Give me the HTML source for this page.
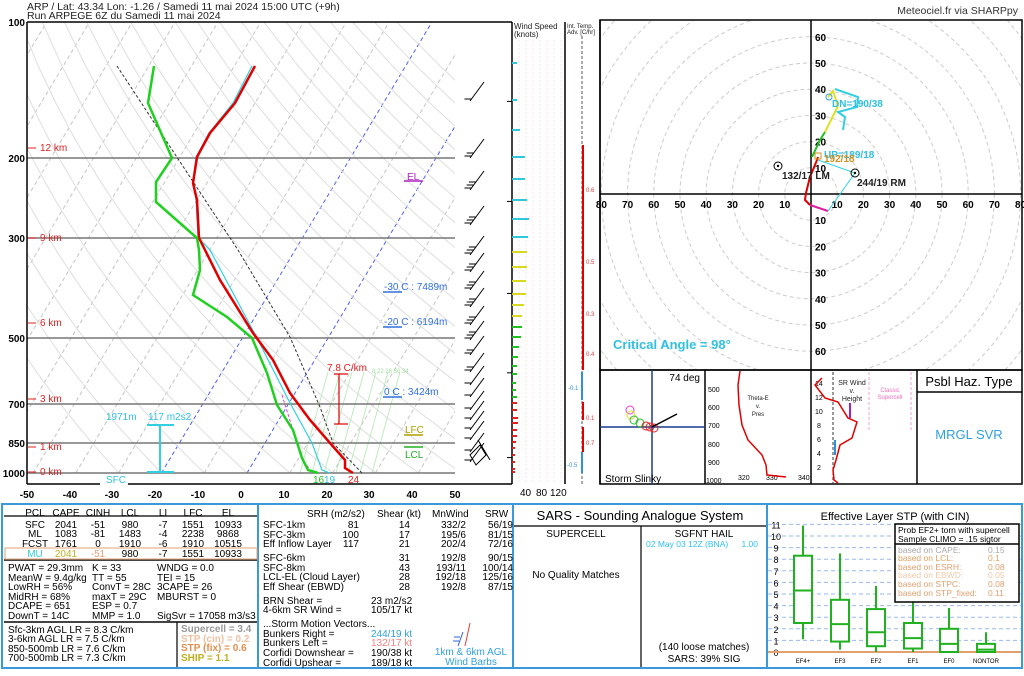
<!DOCTYPE html>
<html><head><meta charset="utf-8"><style>
html,body{margin:0;padding:0;background:#fff;}
body{width:1024px;height:671px;overflow:hidden;font-family:"Liberation Sans",sans-serif;}
svg text{font-family:"Liberation Sans",sans-serif;}
</style></head><body>
<svg id="s" width="1024" height="671" viewBox="0 0 1024 671" xmlns="http://www.w3.org/2000/svg">
<rect width="1024" height="671" fill="#fff"/>
<defs>
<clipPath id="sk"><rect x="27" y="22" width="428" height="451"/></clipPath>
<clipPath id="ho"><rect x="601" y="21" width="421" height="348"/></clipPath>
</defs>
<g id="grid" clip-path="url(#sk)"></g>
<g id="hgrid" clip-path="url(#ho)"></g>

<!-- header -->
<text x="27" y="10" font-size="10.5" fill="#222">ARP / Lat: 43.34 Lon: -1.26 / Samedi 11 mai 2024 15:00 UTC (+9h)</text>
<text x="27" y="19" font-size="10.5" fill="#222">Run ARPEGE 6Z du Samedi 11 mai 2024</text>
<text x="1018" y="14" font-size="10.5" fill="#333" text-anchor="end">Meteociel.fr via SHARPpy</text>

<!-- skewT pressure lines -->
<g stroke="#777" stroke-width="1.5">
<line x1="27" y1="158" x2="455" y2="158"/><line x1="27" y1="238" x2="455" y2="238"/>
<line x1="27" y1="338" x2="455" y2="338"/><line x1="27" y1="404" x2="455" y2="404"/>
<line x1="27" y1="443" x2="455" y2="443"/><line x1="27" y1="473" x2="455" y2="473"/>
</g>
<g stroke="#000" stroke-width="1.5" fill="none">
<line x1="27" y1="22" x2="512" y2="22"/>
<line x1="27" y1="22" x2="27" y2="484"/>
<line x1="27" y1="484" x2="100" y2="484"/><line x1="128" y1="484" x2="512" y2="484"/>
<line x1="512" y1="22" x2="512" y2="484"/>
</g>
<g font-size="10" font-weight="bold" fill="#000" text-anchor="end">
<text x="25" y="26">100</text><text x="25" y="162">200</text><text x="25" y="242">300</text>
<text x="25" y="342">500</text><text x="25" y="408">700</text><text x="25" y="447">850</text><text x="25" y="477">1000</text>
</g>
<g font-size="10" font-weight="bold" fill="#000" text-anchor="middle">
<text x="27" y="498">-50</text><text x="70" y="498">-40</text><text x="112" y="498">-30</text><text x="155" y="498">-20</text>
<text x="198" y="498">-10</text><text x="241" y="498">0</text><text x="284" y="498">10</text><text x="327" y="498">20</text>
<text x="369" y="498">30</text><text x="412" y="498">40</text><text x="455" y="498">50</text>
</g>
<g font-size="10" fill="#e02020">
<line x1="28" y1="148" x2="36" y2="148" stroke="#e02020"/><text x="40" y="151">12 km</text>
<line x1="28" y1="238" x2="36" y2="238" stroke="#e02020"/><text x="40" y="241">9 km</text>
<line x1="28" y1="323" x2="36" y2="323" stroke="#e02020"/><text x="40" y="326">6 km</text>
<line x1="28" y1="399" x2="36" y2="399" stroke="#e02020"/><text x="40" y="402">3 km</text>
<line x1="28" y1="447" x2="36" y2="447" stroke="#e02020"/><text x="40" y="450">1 km</text>
<line x1="28" y1="472" x2="36" y2="472" stroke="#e02020"/><text x="40" y="475">0 km</text>
</g>

<!-- profiles -->
<polyline fill="none" stroke="#333" stroke-width="1" stroke-dasharray="3,2" points="117,66 238,250 290,337 320,407 333,443 362,473"/>
<polyline fill="none" stroke="#e040e0" stroke-width="1" stroke-dasharray="3,2" points="282,395 293,430 302,458 310,470"/>
<polyline fill="none" stroke="#30d0e0" stroke-width="1.2" points="252,66 233,103 209,133 196,157 193,183 196,200 198,238 210,250 233,293 257,338 290,403 312,443 322,470 330,473"/>
<polyline fill="none" stroke="#e00000" stroke-width="2.5" points="255,66 235,103 210,133 197,157 193,183 197,200 199,238 205,250 220,280 253,333 273,360 290,393 310,420 330,443 345,460 345,468 353,473"/>
<polyline fill="none" stroke="#20d020" stroke-width="2.5" points="154,66 148,103 172,158 156,182 156,202 197,238 199,250 200,270 193,295 227,317 252,338 267,373 277,405 293,430 302,458 308,470 318,473"/>
<g stroke="#e00000" stroke-width="1.2"><line x1="334" y1="374" x2="348" y2="374"/><line x1="334" y1="424" x2="348" y2="424"/><line x1="339" y1="374" x2="339" y2="424"/></g>
<text x="327" y="371" font-size="10" fill="#e02020">7.8 C/km</text>
<g stroke="#30d0e0" stroke-width="2"><line x1="147" y1="425" x2="174" y2="425"/><line x1="147" y1="472" x2="174" y2="472"/><line x1="160" y1="425" x2="160" y2="472"/></g>
<text x="106" y="420" font-size="10" fill="#30c0e0">1971m</text><text x="148" y="420" font-size="10" fill="#30c0e0">117 m2s2</text>
<text x="106" y="483" font-size="10" fill="#30c0e0">SFC</text>
<text x="313" y="483" font-size="10" fill="#20c020">16</text><text x="324" y="483" font-size="10" fill="#30c0e0">19</text><text x="348" y="483" font-size="10" fill="#e02020">24</text>
<text x="407" y="180" font-size="10" fill="#b020c0">EL</text><line x1="404" y1="181" x2="423" y2="181" stroke="#b020c0" stroke-width="1.5"/>
<text x="405" y="433" font-size="10" fill="#b0a000">LFC</text><line x1="404" y1="435" x2="423" y2="435" stroke="#b0a000" stroke-width="1.5"/>
<line x1="404" y1="447" x2="423" y2="447" stroke="#20b020" stroke-width="1.5"/><text x="405" y="458" font-size="10" fill="#20b020">LCL</text>
<g font-size="10" fill="#3070e0">
<text x="384" y="290">-30 C : 7489m</text><line x1="383" y1="292" x2="402" y2="292" stroke="#3070e0" stroke-width="1.5"/>
<text x="384" y="325">-20 C : 6194m</text><line x1="383" y1="327" x2="402" y2="327" stroke="#3070e0" stroke-width="1.5"/>
<text x="384" y="395">0 C : 3424m</text><line x1="383" y1="397" x2="402" y2="397" stroke="#3070e0" stroke-width="1.5"/>
</g>
<text x="372" y="373" font-size="6" fill="#a0e0a0">8 22 26 30 34</text>
<g id="barbs" stroke="#000" stroke-width="1" fill="none"></g>

<!-- wind speed panel -->
<text x="514" y="29" font-size="8" fill="#222">Wind Speed</text><text x="514" y="37" font-size="8" fill="#222">(knots)</text>
<g stroke="#f6e0dc" stroke-width="0.8" stroke-dasharray="2,2">
<line x1="519" y1="40" x2="519" y2="484"/><line x1="526" y1="40" x2="526" y2="484"/><line x1="533" y1="40" x2="533" y2="484"/>
<line x1="540" y1="40" x2="540" y2="484"/><line x1="547" y1="40" x2="547" y2="484"/><line x1="554" y1="40" x2="554" y2="484"/><line x1="561" y1="40" x2="561" y2="484"/>
</g>
<line x1="565" y1="22" x2="565" y2="484" stroke="#000" stroke-width="1.5"/>
<g id="ws" stroke-width="2"></g>
<text x="520" y="496" font-size="10" fill="#000">40</text><text x="536" y="496" font-size="10" fill="#000">80</text><text x="550" y="496" font-size="10" fill="#000">120</text>
<!-- temp adv -->
<text x="567" y="28" font-size="6" fill="#222">Int. Temp.</text><text x="567" y="34" font-size="6" fill="#222">Adv. [C/hr]</text>
<line x1="582" y1="36" x2="582" y2="484" stroke="#555" stroke-dasharray="3,2"/>
<g stroke="#e00000" stroke-width="2"><line x1="583" y1="145" x2="583" y2="370"/><line x1="583" y1="402" x2="583" y2="420"/><line x1="583" y1="427" x2="583" y2="452"/></g>
<line x1="582" y1="372" x2="582" y2="400" stroke="#3090e0" stroke-width="2"/><line x1="582" y1="452" x2="582" y2="473" stroke="#3090e0" stroke-width="2"/>
<g font-size="6" fill="#e04040"><text x="586" y="192">0.6</text><text x="586" y="264">0.5</text><text x="586" y="316">0.3</text><text x="586" y="356">0.4</text><text x="586" y="420">0.1</text><text x="586" y="445">0.7</text></g>
<g font-size="6" fill="#3090e0"><text x="568" y="390">-0.1</text><text x="567" y="467">-0.5</text></g>
<line x1="600" y1="20" x2="600" y2="484" stroke="#000" stroke-width="1.5"/>

<!-- hodograph -->
<rect x="600" y="20" width="422" height="350" fill="none" stroke="#000" stroke-width="1.5"/>
<line x1="811" y1="20" x2="811" y2="370" stroke="#000" stroke-width="1.5"/>
<line x1="600" y1="194" x2="1022" y2="194" stroke="#000" stroke-width="1.5"/>
<g id="hlab" font-size="10" font-weight="bold" fill="#000"></g>
<g fill="none" stroke-width="2">
<polyline stroke="#e020a0" points="828,211 810,205"/>
<polyline stroke="#e00000" points="810,205 805,200 806,193 810,177 817,160 818,157"/>
<polyline stroke="#20c020" points="812,157 820,140 825,132"/>
<polyline stroke="#e0e020" points="825,132 838,106 833,91 828,97"/>
<polyline stroke="#30d0e0" points="835,89 858,97 857,107 838,112 845,117 843,130"/>
</g>
<polyline fill="none" stroke="#30d0e0" stroke-width="1" points="828,211 855,173 818,160"/>
<g fill="none" stroke="#000" stroke-width="1"><circle cx="778" cy="166" r="4"/><circle cx="855" cy="173" r="4"/></g>
<circle cx="778" cy="166" r="1.2"/><circle cx="855" cy="173" r="1.2"/>
<rect x="815" y="153" width="6" height="6" fill="none" stroke="#d09020"/>
<circle cx="829" cy="97" r="3" fill="none" stroke="#30a0e0"/>
<text x="782" y="179" font-size="10" font-weight="bold" fill="#222">132/17 LM</text>
<text x="857" y="186" font-size="10" font-weight="bold" fill="#222">244/19 RM</text>
<text x="832" y="107" font-size="10" font-weight="bold" fill="#30c0e0">DN=190/38</text>
<text x="824" y="158" font-size="10" font-weight="bold" fill="#30c0e0">UP=189/18</text>
<text x="824" y="162" font-size="10" font-weight="bold" fill="#d09020">192/18</text>
<text x="613" y="349" font-size="13" font-weight="bold" fill="#30c0e0">Critical Angle = 98°</text>

<!-- lower right panels -->
<g stroke="#000" stroke-width="1.5" fill="none">
<rect x="600" y="370" width="422" height="114"/>
<line x1="705" y1="370" x2="705" y2="484"/><line x1="811" y1="370" x2="811" y2="484"/><line x1="917" y1="370" x2="917" y2="484"/>
<line x1="917" y1="392" x2="1022" y2="392"/>
</g>
<line x1="652" y1="370" x2="652" y2="484" stroke="#1a3a8a" stroke-width="1.5"/>
<line x1="600" y1="427" x2="705" y2="427" stroke="#1a3a8a" stroke-width="1.5"/>
<text x="700" y="381" font-size="10" fill="#000" text-anchor="end">74 deg</text>
<g fill="none" stroke-width="1"><circle cx="630" cy="410" r="4" stroke="#e040e0"/><circle cx="631" cy="415" r="4" stroke="#e0e020"/><circle cx="634" cy="420" r="4" stroke="#30c030"/><circle cx="640" cy="423" r="4" stroke="#20c020"/><circle cx="646" cy="426" r="4" stroke="#e02020"/><circle cx="650" cy="427" r="4" stroke="#e02020"/><circle cx="654" cy="428" r="4" stroke="#e02020"/></g>
<line x1="652" y1="427" x2="677" y2="414" stroke="#000" stroke-width="1.5"/>
<text x="605" y="482" font-size="10" fill="#000">Storm Slinky</text>
<g font-size="7" fill="#000"><text x="708" y="392">500</text><text x="708" y="410">600</text><text x="708" y="428">700</text><text x="708" y="447">800</text><text x="708" y="465">900</text><text x="706" y="483">1000</text>
<text x="738" y="480">320</text><text x="766" y="480">330</text><text x="798" y="480">340</text></g>
<g font-size="6" fill="#222" text-anchor="middle"><text x="758" y="400">Theta-E</text><text x="758" y="408">v.</text><text x="758" y="416">Pres</text></g>
<polyline fill="none" stroke="#e00000" stroke-width="1.5" points="740,371 738,385 739,405 742,425 748,440 762,455 766,465 767,475 786,477"/>
<g font-size="7" fill="#000"><text x="815" y="386">14</text><text x="815" y="400">12</text><text x="815" y="414">10</text><text x="817" y="428">8</text><text x="817" y="442">6</text><text x="817" y="456">4</text><text x="817" y="470">2</text></g>
<line x1="833" y1="372" x2="833" y2="484" stroke="#333" stroke-dasharray="3,2"/>
<g stroke="#f0a0d0" stroke-dasharray="3,2"><line x1="869" y1="372" x2="869" y2="430"/><line x1="911" y1="372" x2="911" y2="430"/></g>
<g font-size="6" fill="#f070c0" text-anchor="middle"><text x="890" y="392">Classic</text><text x="890" y="399">Supercell</text></g>
<g font-size="7" fill="#222" text-anchor="middle"><text x="852" y="385">SR Wind</text><text x="852" y="393">v.</text><text x="852" y="401">Height</text></g>
<polyline fill="none" stroke="#e00000" stroke-width="1.5" points="822,378 815,385 825,398 838,402 848,418 857,422 852,438 840,445 836,460 833,470 834,480 838,483"/>
<line x1="850" y1="403" x2="850" y2="418" stroke="#a020c0" stroke-width="2"/>
<line x1="835" y1="440" x2="835" y2="455" stroke="#3090e0" stroke-width="2"/>
<text x="969" y="386" font-size="13" fill="#000" text-anchor="middle">Psbl Haz. Type</text>
<text x="969" y="439" font-size="13" fill="#30a0e0" text-anchor="middle">MRGL SVR</text>

<!-- bottom panels -->
<g fill="none" stroke="#3a9ad9" stroke-width="2">
<rect x="2" y="504" width="1020" height="164"/>
<line x1="258" y1="504" x2="258" y2="668"/><line x1="513" y1="504" x2="513" y2="668"/><line x1="767" y1="504" x2="767" y2="668"/>
</g>
<g stroke="#000" stroke-width="1.2">
<line x1="4" y1="516" x2="257" y2="516"/><line x1="4" y1="560" x2="257" y2="560" stroke-width="2" stroke="#444"/>
<line x1="4" y1="622" x2="257" y2="622" stroke-width="2" stroke="#444"/><line x1="177" y1="622" x2="177" y2="667"/>
<line x1="514" y1="526" x2="766" y2="526"/><line x1="641" y1="526" x2="641" y2="667"/>
</g>
<rect x="5" y="548" width="252" height="11" fill="none" stroke="#e0a070" stroke-width="1"/>
<g font-size="10" fill="#000" text-anchor="middle">
<text x="35" y="516">PCL</text><text x="66" y="516">CAPE</text><text x="98" y="516">CINH</text><text x="130" y="516">LCL</text><text x="163" y="516">LI</text><text x="193" y="516">LFC</text><text x="228" y="516">EL</text>
<text x="35" y="528">SFC</text><text x="66" y="528">2041</text><text x="98" y="528">-51</text><text x="130" y="528">980</text><text x="163" y="528">-7</text><text x="193" y="528">1551</text><text x="228" y="528">10933</text>
<text x="35" y="537">ML</text><text x="66" y="537">1083</text><text x="98" y="537">-81</text><text x="130" y="537">1483</text><text x="163" y="537">-4</text><text x="193" y="537">2238</text><text x="228" y="537">9868</text>
<text x="35" y="547">FCST</text><text x="66" y="547">1761</text><text x="98" y="547">0</text><text x="130" y="547">1910</text><text x="163" y="547">-6</text><text x="193" y="547">1910</text><text x="228" y="547">10515</text>
<text x="35" y="557" fill="#30d0e0">MU</text><text x="66" y="557" fill="#c0b020">2041</text><text x="98" y="557" fill="#e0a070">-51</text><text x="130" y="557">980</text><text x="163" y="557">-7</text><text x="193" y="557">1551</text><text x="228" y="557">10933</text>
</g>
<g font-size="10" fill="#000">
<text x="8" y="571">PWAT = 29.3mm</text><text x="92" y="571">K = 33</text><text x="157" y="571">WNDG = 0.0</text>
<text x="8" y="581">MeanW = 9.4g/kg</text><text x="92" y="581">TT = 55</text><text x="157" y="581">TEI = 15</text>
<text x="8" y="590">LowRH = 56%</text><text x="92" y="590">ConvT = 28C</text><text x="157" y="590">3CAPE = 26</text>
<text x="8" y="600">MidRH = 68%</text><text x="92" y="600">maxT = 29C</text><text x="157" y="600">MBURST = 0</text>
<text x="8" y="609">DCAPE = 651</text><text x="92" y="609">ESP = 0.7</text>
<text x="8" y="619">DownT = 14C</text><text x="92" y="619">MMP = 1.0</text><text x="157" y="619">SigSvr = 17058 m3/s3</text>
<text x="8" y="633">Sfc-3km AGL LR = 8.3 C/km</text><text x="8" y="642">3-6km AGL LR = 7.5 C/km</text>
<text x="8" y="652">850-500mb LR = 7.6 C/km</text><text x="8" y="661">700-500mb LR = 7.3 C/km</text>
</g>
<g font-size="10" font-weight="bold">
<text x="181" y="632" fill="#999">Supercell = 3.4</text><text x="181" y="642" fill="#f0c0a0">STP (cin) = 0.2</text>
<text x="181" y="651" fill="#e09050">STP (fix) = 0.6</text><text x="181" y="661" fill="#c0b020">SHIP = 1.1</text>
</g>
<g font-size="10" fill="#000">
<text x="307" y="517">SRH (m2/s2)</text><text x="377" y="517">Shear (kt)</text><text x="432" y="517">MnWind</text><text x="485" y="517">SRW</text>
<text x="263" y="528">SFC-1km</text><text x="263" y="538">SFC-3km</text><text x="263" y="547">Eff Inflow Layer</text>
<text x="263" y="561">SFC-6km</text><text x="263" y="571">SFC-8km</text><text x="263" y="580">LCL-EL (Cloud Layer)</text><text x="263" y="590">Eff Shear (EBWD)</text>
<text x="263" y="604">BRN Shear =</text><text x="263" y="613">4-6km SR Wind =</text>
<text x="263" y="627">...Storm Motion Vectors...</text><text x="263" y="637">Bunkers Right =</text><text x="263" y="646">Bunkers Left =</text>
<text x="263" y="656">Corfidi Downshear =</text><text x="263" y="666">Corfidi Upshear =</text>
<text x="371" y="604">23 m2/s2</text><text x="371" y="613">105/17 kt</text>
<text x="371" y="637" fill="#30a0e0">244/19 kt</text><text x="371" y="646" fill="#f08080">132/17 kt</text>
<text x="371" y="656">190/38 kt</text><text x="371" y="666">189/18 kt</text>
</g>
<g font-size="10" fill="#000" text-anchor="end">
<text x="359" y="528">81</text><text x="359" y="538">100</text><text x="359" y="547">117</text>
<text x="410" y="528">14</text><text x="410" y="538">17</text><text x="410" y="547">21</text>
<text x="410" y="561">31</text><text x="410" y="571">43</text><text x="410" y="580">28</text><text x="410" y="590">28</text>
<text x="466" y="528">332/2</text><text x="466" y="538">195/6</text><text x="466" y="547">202/4</text>
<text x="466" y="561">192/8</text><text x="466" y="571">193/11</text><text x="466" y="580">192/18</text><text x="466" y="590">192/8</text>
<text x="513" y="528">56/19</text><text x="513" y="538">81/15</text><text x="513" y="547">72/16</text>
<text x="513" y="561">90/15</text><text x="513" y="571">100/14</text><text x="513" y="580">125/16</text><text x="513" y="590">87/15</text>
</g>
<g font-size="10" fill="#30a0e0" text-anchor="middle"><text x="471" y="655">1km &amp; 6km AGL</text><text x="471" y="665">Wind Barbs</text></g>
<g stroke="#e04040" fill="none"><line x1="470" y1="623" x2="465" y2="646"/></g>
<g stroke="#3060e0" fill="none"><line x1="463" y1="632" x2="458" y2="646"/><line x1="454" y1="637" x2="460" y2="637"/><line x1="453" y1="641" x2="459" y2="641"/></g>

<text x="640" y="520" font-size="13" fill="#000" text-anchor="middle">SARS - Sounding Analogue System</text>
<g font-size="10" fill="#000" text-anchor="middle">
<text x="576" y="537">SUPERCELL</text><text x="704" y="537">SGFNT HAIL</text>
<text x="576" y="578">No Quality Matches</text>
<text x="704" y="650">(140 loose matches)</text><text x="704" y="662">SARS: 39% SIG</text>
</g>
<text x="646" y="547" font-size="8.5" fill="#30c0f0">02 May 03 12Z (BNA)</text><text x="758" y="547" font-size="8.5" fill="#30c0f0" text-anchor="end">1.00</text>

<text x="895" y="520" font-size="11" fill="#000" text-anchor="middle">Effective Layer STP (with CIN)</text>
<g id="stp"></g>
<rect x="895" y="524" width="124" height="78" fill="#fff" stroke="#000" stroke-width="1.5"/>
<line x1="895" y1="544" x2="1019" y2="544" stroke="#000" stroke-width="1.5"/>
<g font-size="8.5"><text x="898" y="533" fill="#000">Prob EF2+ torn with supercell</text><text x="898" y="542" fill="#000">Sample CLIMO = .15 sigtor</text>
<text x="898" y="553" fill="#aaa">based on CAPE:</text><text x="988" y="553" fill="#aaa">0.15</text>
<text x="898" y="561" fill="#e0a060">based on LCL:</text><text x="988" y="561" fill="#e0a060">0.1</text>
<text x="898" y="570" fill="#e0a070">based on ESRH:</text><text x="988" y="570" fill="#e0a070">0.08</text>
<text x="898" y="578" fill="#f0c8a8">based on EBWD:</text><text x="988" y="578" fill="#f0c8a8">0.05</text>
<text x="898" y="587" fill="#e0a070">based on STPC:</text><text x="988" y="587" fill="#e0a070">0.08</text>
<text x="898" y="596" fill="#e0a070">based on STP_fixed:</text><text x="988" y="596" fill="#e0a070">0.11</text></g>
</svg>
<script>
var NS="http://www.w3.org/2000/svg";
function el(p,t,a,txt){var e=document.createElementNS(NS,t);for(var k in a)e.setAttribute(k,a[k]);if(txt!==undefined)e.textContent=txt;p.appendChild(e);return e;}
function Y(p){return 22+195.8*Math.log(p/100);}
function X(T,y){return 247+4.28*T+0.6*(473-y);}
var g=document.getElementById("grid");
for(var T=-160;T<=60;T+=10){var c=(T==-20||T==0)?"#5060f0":"#c4c4c4";
el(g,"line",{x1:X(T,473),y1:473,x2:X(T,22),y2:22,stroke:c,"stroke-width":1,"stroke-dasharray":"4,3"});}
for(var th=-30;th<=200;th+=10){var pts=[];for(var p=1050;p>=100;p-=25){var Tk=(th+273.15)*Math.pow(p/1000,0.286)-273.15;var y=Y(p);pts.push(X(Tk,y).toFixed(1)+","+y.toFixed(1));}
el(g,"polyline",{points:pts.join(" "),fill:"none",stroke:"#dedede","stroke-width":1});}
[0,1,2,3,4,5,6].forEach(function(i){var x0=300+i*12;el(g,"line",{x1:x0,y1:473,x2:x0+28,y2:372,stroke:"#b0e8b0","stroke-width":0.8});});
var s=document.getElementById("s");
[150,250,400,600,925].forEach(function(p){var y=Y(p);el(s,"line",{x1:507,y1:y,x2:512,y2:y,stroke:"#000"});});
var b=document.getElementById("barbs");
var bar=[[101,1],[158,2],[190,3],[225,3],[255,3],[272,3],[290,3],[307,3],[325,3],[340,3],[355,2],[372,2],[385,1],[397,1],[410,1],[420,1],[430,1],[440,1],[452,1],[462,1]];
bar.forEach(function(d){var y=d[0],x=470,tx=x+14,ty=y-19;el(b,"line",{x1:x,y1:y,x2:tx,y2:ty});for(var i=0;i<d[1];i++){var yy=y-2-i*3,xx=x+(2+i*3)*14/19;el(b,"line",{x1:xx,y1:yy,x2:xx-7,y2:yy});}});
el(b,"path",{d:"M470,455 L480,445 L486,455 L476,465 Z M478,440 L490,460"});
var w=document.getElementById("ws");
var ws=[[63,5,"#30c8d8"],[100,5,"#30c8d8"],[130,8,"#30c8d8"],[157,13,"#30c8d8"],[179,13,"#30c8d8"],[200,15,"#30c8d8"],[219,17,"#30c8d8"],[237,16,"#30c8d8"],[252,15,"#d8d820"],[267,15,"#d8d820"],[281,14,"#d8d820"],[294,14,"#d8d820"],[305,12,"#d8d820"],[316,10,"#d8d820"],[327,10,"#20c020"],[337,9,"#20c020"],[347,7,"#20c020"],[357,6,"#20c020"],[366,5,"#20c020"],[374,5,"#20c020"],[383,4,"#20c020"],[390,4,"#20c020"],[397,5,"#20c020"],[403,5,"#e02020"],[410,5,"#e02020"],[418,6,"#e02020"],[423,6,"#e02020"],[430,5,"#e02020"],[436,5,"#e02020"],[442,4,"#e02020"],[448,3,"#e02020"],[455,3,"#e02020"],[462,3,"#e02020"],[469,3,"#e02020"],[472,3,"#e02020"]];
ws.forEach(function(d){el(w,"line",{x1:512,y1:d[0],x2:512+d[1],y2:d[0],stroke:d[2]});});
var h=document.getElementById("hgrid");
for(var r=1;r<=10;r++){el(h,"circle",{cx:811,cy:194,r:r*26.2,fill:"none",stroke:"#ccc","stroke-dasharray":"4,3"});}
var hl=document.getElementById("hlab");
for(var k=1;k<=8;k++){var v=k*10,d=k*26.2;
if(811-d>598)el(hl,"text",{x:811-d,y:208,"text-anchor":"middle"},v);
if(811+d<1024)el(hl,"text",{x:811+d,y:208,"text-anchor":"middle"},v);
if(k<=6){el(hl,"text",{x:815,y:194-d+4},v);el(hl,"text",{x:815,y:194+d+4},v);}}
var st=document.getElementById("stp");
function SY(v){return 652-v*11.6;}
for(var v=0;v<=11;v++){var y=SY(v);el(st,"line",{x1:768,y1:y,x2:1021,y2:y,stroke:"#9ab8f0","stroke-dasharray":"4,3"});el(st,"text",{x:776,y:y+4,"font-size":9,fill:"#000","text-anchor":"middle"},v);}
el(st,"line",{x1:768,y1:652,x2:1021,y2:652,stroke:"#e0a070","stroke-width":2});
var bx=[[803,1.1,10.9,2.5,8.3,5.3,"EF4+"],[840,0.2,8.5,0.9,4.5,2.4,"EF3"],[876,0,5.7,0.5,3.7,1.7,"EF2"],[913,0,4.5,0.3,2.5,1.2,"EF1"],[949,0,3.8,0,2.0,0.7,"EF0"],[986,0,1.7,0,0.7,0.2,"NONTOR"]];
bx.forEach(function(d){var x=d[0];el(st,"line",{x1:x,y1:SY(d[1]),x2:x,y2:SY(d[2]),stroke:"#20b020","stroke-width":2});
el(st,"rect",{x:x-9,y:SY(d[4]),width:18,height:SY(d[3])-SY(d[4]),fill:"#fff",stroke:"#20b020","stroke-width":2});
el(st,"line",{x1:x-9,y1:SY(d[5]),x2:x+9,y2:SY(d[5]),stroke:"#20b020","stroke-width":2});
el(st,"text",{x:x,y:663,"font-size":6,fill:"#000","text-anchor":"middle"},d[6]);});
</script>
</body></html>
